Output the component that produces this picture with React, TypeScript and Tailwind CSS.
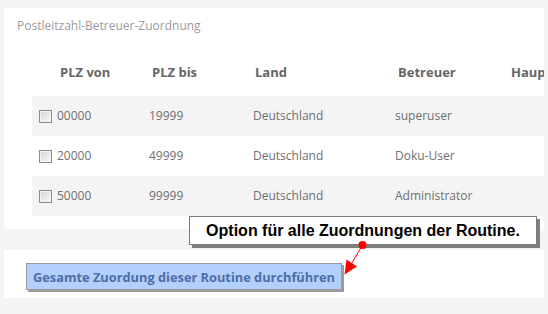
import React from "react"

const rows = [
  { von: "00000", bis: "19999", land: "Deutschland", betreuer: "superuser" },
  { von: "20000", bis: "49999", land: "Deutschland", betreuer: "Doku-User" },
  { von: "50000", bis: "99999", land: "Deutschland", betreuer: "Administrator" },
]

function Checkbox() {
  return (
    <span className="ml-[7px] block h-[13px] w-[13px] border border-[#8c8c8c] bg-gradient-to-br from-[#d4d4d4] to-[#fafafa] shadow-[inset_0_0_0_1px_#f2f2f2]" />
  )
}

export default function App() {
  return (
    <div className="relative h-[314px] w-[548px] overflow-hidden bg-[#f4f4f4] pt-[8px] font-['Open_Sans',sans-serif]">
      {/* Zuordnungen */}
      <div className="mx-[4px] h-[221px] overflow-hidden bg-white pt-[10px]">
        <h2 className="pl-[13px] text-[12px] leading-[16px] font-normal text-[#9d999d]">
          Postleitzahl-Betreuer-Zuordnung
        </h2>

        <div className="ml-[28px] mt-[18px] w-[512px] overflow-hidden">
          <div className="grid h-[44px] grid-cols-[25px_92px_104px_142px_110px_1fr] pt-[10px] text-[13px] leading-[20px] font-bold text-[#666]">
            <div />
            <div className="pl-[3px]">PLZ von</div>
            <div className="pl-[3px]">PLZ bis</div>
            <div className="pl-[2px]">Land</div>
            <div className="pl-[3px]">Betreuer</div>
            <div className="overflow-hidden pl-[6px] whitespace-nowrap">Hauptbetreuer</div>
          </div>

          {rows.map((r, i) => (
            <div
              key={r.von}
              className={
                "grid h-[40px] grid-cols-[25px_92px_104px_142px_110px_1fr] items-center text-[12px] leading-[16px] text-[#6f6f6f] " +
                (i % 2 === 0 ? "bg-[#f4f4f4]" : "bg-white")
              }
            >
              <div>
                <Checkbox />
              </div>
              <div>{r.von}</div>
              <div>{r.bis}</div>
              <div>{r.land}</div>
              <div>{r.betreuer}</div>
              <div />
            </div>
          ))}
        </div>
      </div>

      {/* Aktion */}
      <div className="mx-[4px] mt-[21px] h-[48px] bg-white pl-[22px] pt-[13px]">
        <button className="h-[27px] border border-[#9a9a9a] bg-[#b3cffb] px-[6px] text-[12.8px] leading-[16px] font-bold text-[#4d6ea6] shadow-[2px_2px_0_#9c9c9c]">
          Gesamte Zuordung dieser Routine durchführen
        </button>
      </div>

      {/* Hinweis */}
      <div className="absolute left-[189px] top-[216px] flex h-[29px] w-[348px] items-center justify-center border border-[#7a7a7a] bg-white font-['Liberation_Sans',Arial,sans-serif] text-[16px] leading-[18px] font-bold text-black shadow-[3px_3px_0_#808080]">
        Option für alle Zuordnungen der Routine.
      </div>
      <svg
        className="pointer-events-none absolute left-0 top-0"
        width="548"
        height="314"
        viewBox="0 0 548 314"
      >
        <line x1="362.5" y1="245" x2="352" y2="263" stroke="#ff0000" strokeWidth="1" />
        <polygon points="344.5,274.5 346.5,259.5 357,266.5" fill="#ff0000" />
        <circle cx="362.5" cy="245" r="4" fill="#ff0000" />
      </svg>
    </div>
  )
}
